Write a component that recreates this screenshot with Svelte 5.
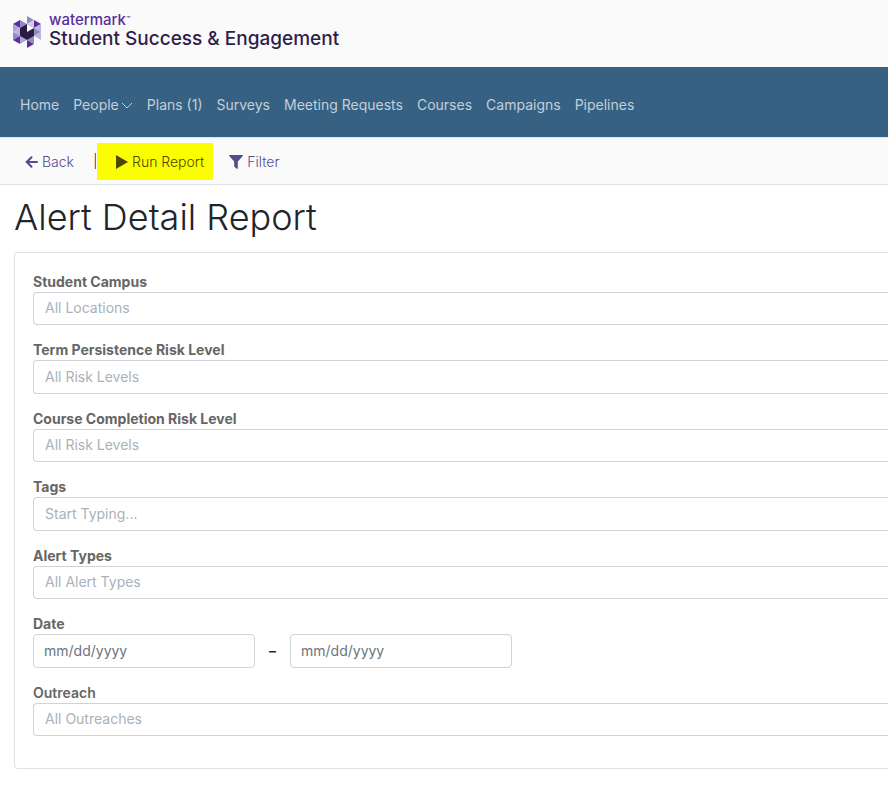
<script>
  const navItems = ['Home', 'People', 'Plans (1)', 'Surveys', 'Meeting Requests', 'Courses', 'Campaigns', 'Pipelines'];

  const fields = [
    { id: 'campus', label: 'Student Campus', hint: 'All Locations' },
    { id: 'term-risk', label: 'Term Persistence Risk Level', hint: 'All Risk Levels', tall: true },
    { id: 'course-risk', label: 'Course Completion Risk Level', hint: 'All Risk Levels' },
    { id: 'tags', label: 'Tags', hint: 'Start Typing...', tall: true },
    { id: 'alert-types', label: 'Alert Types', hint: 'All Alert Types' },
    { id: 'date', label: 'Date', range: true, tall: true },
    { id: 'outreach', label: 'Outreach', hint: 'All Outreaches', semi: true }
  ];
</script>

<header class="brand">
  <svg class="mark" viewBox="0 0 28 32" aria-hidden="true">
    <path fill="#8f8bc8" d="M14 0l7 4-7 4z" />
    <path fill="#d3c9e8" d="M14 8l7-4v8z" />
    <path fill="#5a2d9a" d="M0 8l7-4v8z" />
    <path fill="#8f8bc8" d="M7 4l7 4-7 4z" />
    <path fill="#a9a6d6" d="M7 12l7-4v8z" />
    <path fill="#5a2d9a" d="M21 4l7 4-7 4z" />
    <path fill="#c0b2dd" d="M21 12l7-4v8z" />
    <path fill="#a9a6d6" d="M0 8l7 4-7 4z" />
    <path fill="#c0b2dd" d="M0 16l7-4v8z" />
    <path fill="#8f8bc8" d="M0 16l7 4-7 4z" />
    <path fill="#8f8bc8" d="M21 12l7 4-7 4z" />
    <path fill="#c0b2dd" d="M21 20l7-4v8z" />
    <path fill="#5a2d9a" d="M0 24l7-4v8z" />
    <path fill="#a9a6d6" d="M7 20l7 4-7 4z" />
    <path fill="#5a2d9a" d="M14 24l7 4-7 4z" />
    <path fill="#8f8bc8" d="M14 24l7-4v8z" />
    <path fill="#2c1a47" d="M14 8l7 4v8l-7 4-7-4v-8z" />
    <path fill="#fff" d="M14 8l7 4-7 4z" />
  </svg>
  <div class="words">
    <span class="company">watermark<small>™</small></span>
    <span class="product">Student Success &amp; Engagement</span>
  </div>
</header>

<nav class="nav" aria-label="Main">
  {#each navItems as item}
    <a href="#{item}">
      {item}{#if item === 'People'}<svg class="caret" viewBox="0 0 12 8" aria-hidden="true"><path d="M1 1l5 5 5-5" /></svg>{/if}
    </a>
  {/each}
</nav>

<div class="toolbar">
  <button type="button" class="back">
    <svg width="13" height="12" viewBox="0 0 13 12" aria-hidden="true">
      <path d="M12 6H2M6.500 1.200L1.700 6l4.800 4.800" fill="none" stroke="currentColor" stroke-width="2" stroke-linecap="round" />
    </svg>
    Back
  </button>
  <span class="bar"></span>
  <button type="button" class="run">
    <svg width="13" height="14" viewBox="0 0 13 14" aria-hidden="true"><path d="M1 0l12 7-12 7z" fill="currentColor" /></svg>
    Run Report
  </button>
  <button type="button" class="filter">
    <svg width="14" height="14" viewBox="0 0 14 14" aria-hidden="true">
      <path d="M.7 0h12.600q1.100.3.3 1.300L8.800 6.500v6.700q-.3 1-1.100.5L5.200 11.600V6.500L.4 1.300Q-.4.300.7 0z" fill="currentColor" />
    </svg>
    Filter
  </button>
</div>

<main>
  <h1>Alert Detail Report</h1>

  <form class="card">
    {#each fields as field}
      <div class="field" class:tall={field.tall}>
        <label for={field.id} class:semi={field.semi}>{field.label}</label>
        {#if field.range}
          <div class="range">
            <input id={field.id} type="text" placeholder="mm/dd/yyyy" />
            <span>–</span>
            <input type="text" placeholder="mm/dd/yyyy" aria-label="End date" />
          </div>
        {:else}
          <input id={field.id} class="picker" type="text" placeholder={field.hint} />
        {/if}
      </div>
    {/each}
  </form>
</main>

<style>
  :global(body) {
    background: #fff;
    font-family: Inter, "Liberation Sans", sans-serif;
    font-size: 14px;
    color: #212529;
  }
  .brand {
    height: 67px;
    box-sizing: border-box;
    padding: 12px 13px 0;
    display: flex;
    gap: 8px;
    background: #fafafa;
    font-weight: 500;
  }
  .mark {
    width: 28px;
    height: 32px;
    margin-top: 4px;
  }
  .words {
    display: flex;
    flex-direction: column;
    white-space: nowrap;
  }
  .company {
    display: flex;
    align-items: flex-start;
    color: #5a2d9a;
    font-size: 15px;
    line-height: 16px;
  }
  .company small {
    margin-top: 4px;
    font-size: 7px;
    line-height: 7px;
  }
  .product {
    color: #2f1d4c;
    font-size: 19px;
    line-height: 21px;
  }

  .nav {
    height: 70px;
    box-sizing: border-box;
    display: flex;
    align-items: center;
    gap: 14px;
    padding: 5px 20px 0;
    background: #376183;
  }
  .nav a {
    color: #c3cfd9;
    line-height: 20px;
    text-decoration: none;
    white-space: nowrap;
  }
  .caret {
    width: 12px;
    height: 8px;
    margin-left: 2px;
    fill: none;
    stroke: currentColor;
  }

  .toolbar {
    height: 48px;
    box-sizing: border-box;
    display: flex;
    align-items: center;
    padding: 0 25px;
    background: #fafafa;
    border-top: 1px solid #dee2e6;
    border-bottom: 1px solid #dee2e6;
  }
  button {
    display: flex;
    align-items: center;
    gap: 4px;
    padding: 1px 0 0;
    border: 0;
    background: none;
    font: inherit;
    font-weight: 300;
    color: #544a8c;
    white-space: nowrap;
  }
  .bar {
    width: 1px;
    height: 16px;
    margin-left: 20px;
    border-left: 1px solid #f3d3b5;
    background: #3d7fae;
  }
  .run {
    height: 37px;
    margin-left: 1px;
    padding: 1px 9px 0 18px;
    background: #fbfe00;
    color: #4f4600;
  }
  .filter {
    margin-left: 16px;
  }

  main {
    padding: 8px 0 24px 14px;
  }
  h1 {
    margin: 0 0 11px;
    font-size: 36px;
    font-weight: 300;
    line-height: 48px;
  }
  /* the panel runs off the right edge of the page */
  .card {
    padding: 19px 0 17px 18px;
    border: 1px solid #dee2e6;
    border-right: 0;
    border-radius: 4px 0 0 4px;
  }
  .field {
    margin-bottom: 15px;
  }
  label {
    display: block;
    color: #666;
    font-weight: 700;
    line-height: 20px;
  }
  .semi {
    font-weight: 600;
  }
  input {
    display: block;
    box-sizing: border-box;
    width: 222px;
    height: 33px;
    padding: 0 10px 2px;
    border: 1px solid #ced4da;
    border-radius: 4px;
    background: #fff;
    font: inherit;
    color: #495057;
  }
  .tall input {
    height: 34px;
  }
  input::placeholder {
    color: #6c757d;
    opacity: 1;
  }
  .picker {
    width: 100%;
    padding: 0 11px 2px;
    border-right: 0;
    border-radius: 4px 0 0 4px;
  }
  .picker::placeholder {
    color: #a9b1ba;
  }
  .range {
    display: flex;
    align-items: center;
  }
  .range span {
    width: 35px;
    font-weight: 600;
    line-height: 20px;
    text-align: center;
  }
</style>
